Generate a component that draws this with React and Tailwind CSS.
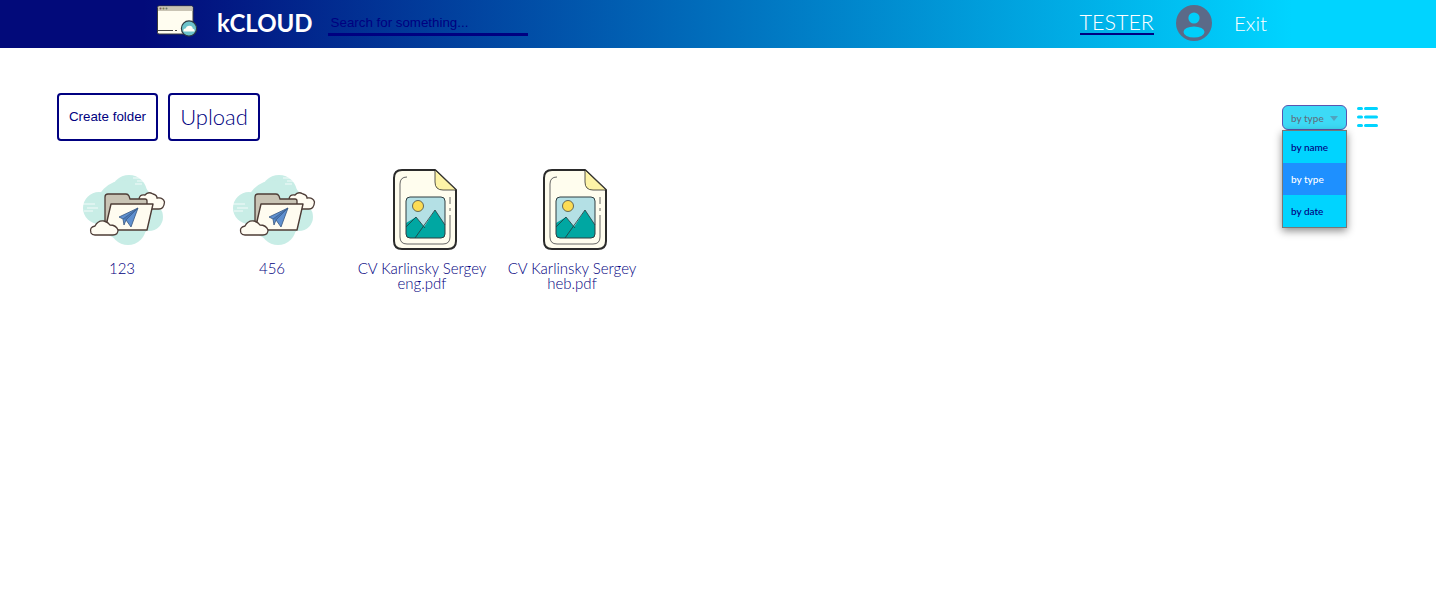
const files = [
  { name: "123", type: "folder" },
  { name: "456", type: "folder" },
  { name: "CV Karlinsky Sergey eng.pdf", type: "file" },
  { name: "CV Karlinsky Sergey heb.pdf", type: "file" },
];

const sortOptions = ["by name", "by type", "by date"];

function LogoIcon() {
  return (
    <svg width="42" height="34" viewBox="0 0 42 34" className="mb-[4px] shrink-0">
      <rect x="0.5" y="1" width="35.5" height="28" rx="1.5" fill="#fffdf0" stroke="#3a3a3a" />
      <path d="M1 6V2.5Q1 1.5 2 1.5H34.5Q35.5 1.5 35.5 2.5V6Z" fill="#c9c4b4" />
      <circle cx="3.5" cy="3.6" r="1" fill="#7a5a5a" />
      <circle cx="6.5" cy="3.6" r="1" fill="#7a7a4a" />
      <circle cx="9.5" cy="3.6" r="1" fill="#6a7a6a" />
      <path d="M1 25.5H16M18 25.5H20" stroke="#333" strokeWidth="0.9" fill="none" />
      <circle cx="32" cy="23.5" r="7.6" fill="#6cc3cb" stroke="#2e3a40" strokeWidth="1.2" />
      <path d="M26.5 26.5Q26 23.5 28.5 23.5Q29.5 20.5 32.5 20.8Q35.5 21 35.7 23.5Q38 24 37.5 26.5Z" fill="#fffdf5" />
    </svg>
  );
}

function FolderIcon() {
  return (
    <svg width="100" height="80" viewBox="0 0 100 80">
      <g fill="#c8ede6">
        <circle cx="54" cy="23" r="18" />
        <circle cx="24" cy="38" r="16" />
        <circle cx="53" cy="57" r="18" />
        <circle cx="74" cy="47" r="14" />
        <circle cx="50" cy="40" r="30" />
      </g>
      <g stroke="#fff" strokeWidth="0.8">
        <path d="M58 8H68M62 11H74M60 14H67M8 34H20M12 38H23M9 41H18" />
      </g>
      <path d="M64 30Q64 24 70 25Q73 21 78 24Q82 25 82 28Q88 27 89.5 32Q89 39 84 39H66Z" fill="#fffcf2" stroke="#4d3c36" strokeWidth="1.3" />
      <path d="M30 60V27Q30 24 33 24H51Q53 24 54 26L55 29H70Q72 29 72 31V38H36L30 60Z" fill="#c9c4b5" stroke="#4d3c36" strokeWidth="1.3" />
      <path d="M36 34H78L72 60H30Z" fill="#fffcf0" stroke="#4d3c36" strokeWidth="1.4" strokeLinejoin="round" />
      <path d="M44 47L63 38L56 57L51 50L49 55L48 49Z" fill="#5f90cf" stroke="#35557f" strokeWidth="0.8" strokeLinejoin="round" />
      <path d="M48 49L63 38L51 50" fill="#4a78b5" stroke="#35557f" strokeWidth="0.6" strokeLinejoin="round" />
      <path d="M16 63Q14 57 20 56Q23 50 29 51Q33 52 35 55Q41 55 43 60Q43 65 38 65H20Q17 65 16 63Z" fill="#fffcf2" stroke="#4d3c36" strokeWidth="1.3" />
    </svg>
  );
}

function FileIcon() {
  return (
    <svg width="70" height="86" viewBox="0 0 70 86">
      <path d="M12 3H45L66 23V74Q66 82 58 82H12Q4 82 4 74V11Q4 3 12 3Z" fill="#fffdee" stroke="#2b2b2b" strokeWidth="2" strokeLinejoin="round" />
      <path d="M45 3V15Q45 23 53 23H66Z" fill="#fdf3a7" stroke="#2b2b2b" strokeWidth="0.8" strokeLinejoin="round" />
      <path d="M17 10Q10 10 10 17V70Q10 77 17 77H53Q60 77 60 70V48M60 44V41M60 37V30" fill="none" stroke="#555" strokeWidth="0.9" />
      <rect x="16" y="30" width="39" height="41" rx="4" fill="#b4e0e5" />
      <circle cx="28" cy="39" r="5.5" fill="#fbdc56" stroke="#333" strokeWidth="0.7" />
      <path d="M16 67V56L26 50L34 60L45 43L55 58V67Q55 71 51 71H20Q16 71 16 67Z" fill="#00a7a2" />
      <path d="M16 60L26 50L35 61M25 71L45 43L55 58" fill="none" stroke="#25393a" strokeWidth="0.8" />
      <rect x="16" y="30" width="39" height="41" rx="4" fill="none" stroke="#2f3d40" strokeWidth="1" />
    </svg>
  );
}

function ListIcon() {
  return (
    <svg width="21" height="22" viewBox="0 0 21 22" className="shrink-0">
      <g fill="#00d4ff">
        <rect x="0" y="1" width="6" height="3" rx="1.5" />
        <rect x="7" y="1" width="14" height="3" rx="1.5" />
        <rect x="0" y="9.5" width="6" height="3" rx="1.5" />
        <rect x="7" y="9.5" width="14" height="3" rx="1.5" />
        <rect x="0" y="18" width="6" height="3" rx="1.5" />
        <rect x="7" y="18" width="14" height="3" rx="1.5" />
      </g>
    </svg>
  );
}

function AvatarIcon() {
  return (
    <svg width="36" height="36" viewBox="0 0 36 36" className="shrink-0">
      <circle cx="18" cy="18" r="18" fill="#5b6a88" />
      <circle cx="18" cy="13" r="5.6" fill="#00cffa" />
      <ellipse cx="18" cy="27" rx="10.5" ry="5.6" fill="#00cffa" />
    </svg>
  );
}

export default function App() {
  return (
    <div className="min-h-[614px] bg-white font-['Lato',sans-serif] text-[#000080]">
      <header className="flex h-12 items-center bg-[linear-gradient(90deg,#020a7a_10%,#00d4ff_90%)] pl-[157px]">
        <LogoIcon />
        <span className="mb-[2px] ml-[18px] text-2xl font-bold text-white">kCLOUD</span>
        <input
          placeholder="Search for something..."
          className="ml-[15px] h-[23px] w-[200px] border-b-[3px] border-[#000080] bg-transparent px-[3px] font-['Liberation_Sans',sans-serif] text-[13.33px] outline-none placeholder:text-[#000080]"
        />
        <div className="mb-[2px] ml-auto flex items-center pr-[169px]">
          <a className="border-b-2 border-[#000080] text-[21.5px] leading-[22px] font-light text-white">TESTER</a>
          <div className="ml-[22px]">
            <AvatarIcon />
          </div>
          <a className="ml-[22px] text-[20.5px] font-light text-white">Exit</a>
        </div>
      </header>

      <main className="relative px-[57px] pt-[45px]">
        <div className="flex items-start justify-between">
          <div className="flex gap-[10px]">
            <button className="h-12 w-[101px] rounded border-2 border-[#000080] font-['Liberation_Sans',sans-serif] text-[13.33px]">
              Create folder
            </button>
            <button className="h-12 w-[92px] rounded border-2 border-[#000080] pb-[2px] text-[22px] font-light">
              Upload
            </button>
          </div>
          <div className="mt-3 mr-[1px] flex items-start gap-[10px]">
            <div className="relative w-[65px]">
              <div className="flex h-[25px] items-center justify-between rounded-md border border-[#5a55b0] bg-[#3ddaf6] pt-[1px] pr-[8px] pl-2 text-[10px] font-medium text-[#5f6f80]">
                <span>by type</span>
                <span className="h-0 w-0 border-x-4 border-t-[5px] border-x-transparent border-t-[#4fa3c0]" />
              </div>
              <ul className="absolute top-[25px] left-0 w-full border border-[#777] bg-[#00d4ff] text-[10px] font-medium shadow-[0_3px_8px_rgba(0,0,0,0.45)]">
                {sortOptions.map((option) => (
                  <li
                    key={option}
                    className={`flex h-8 items-center pl-2 ${option === "by type" ? "bg-[#1e90ff] text-white" : ""}`}
                  >
                    {option}
                  </li>
                ))}
              </ul>
            </div>
            <div className="mt-[1px]">
              <ListIcon />
            </div>
          </div>
        </div>

        <div className="mt-[23px] -ml-[10px] flex">
          {files.map((file) => (
            <div key={file.name} className="flex w-[150px] flex-col items-center">
              <div className="flex h-[92px] items-center justify-center pl-[6px]">
                {file.type === "folder" ? <FolderIcon /> : <FileIcon />}
              </div>
              <div className="mt-[5px] w-[140px] text-center text-[15px] leading-[15px] font-light">
                {file.name}
              </div>
            </div>
          ))}
        </div>
      </main>
    </div>
  );
}
